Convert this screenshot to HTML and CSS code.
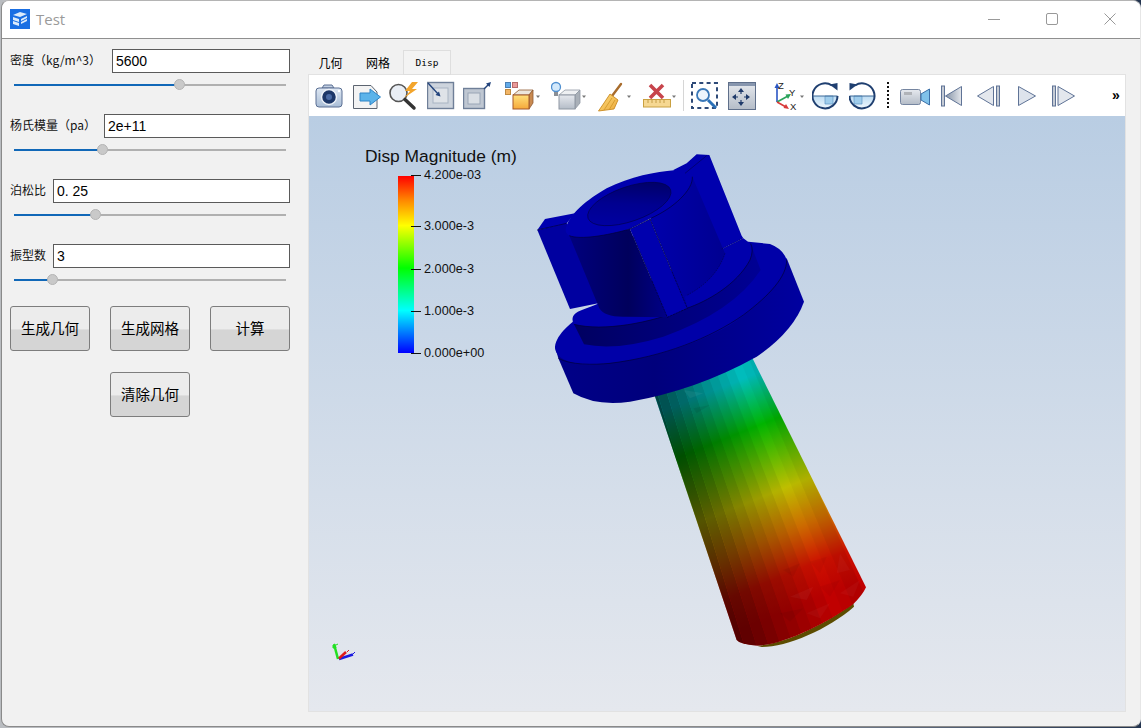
FILE: index.html
```
<!DOCTYPE html>
<html lang="zh">
<head>
<meta charset="utf-8">
<title>Test</title>
<link rel="stylesheet" href="styles.css">
</head>
<body>
<svg class="defs" width="0" height="0" aria-hidden="true">
  <defs>
    <linearGradient id="gBlue" x1="0" y1="0" x2="0" y2="1"><stop offset="0" stop-color="#dfe8f3"/><stop offset="1" stop-color="#a9bdd6"/></linearGradient>
    <linearGradient id="gGrey" x1="0" y1="0" x2="0" y2="1"><stop offset="0" stop-color="#e6e9ee"/><stop offset="1" stop-color="#b4bcc7"/></linearGradient>
    <linearGradient id="gYellow" x1="0" y1="0" x2="0" y2="1"><stop offset="0" stop-color="#ffe07a"/><stop offset="1" stop-color="#f6a83a"/></linearGradient>
    <linearGradient id="gTri" x1="0" y1="0" x2="1" y2="0"><stop offset="0" stop-color="#8593a6"/><stop offset="1" stop-color="#e4e7ec"/></linearGradient>
    <linearGradient id="gBroom" x1="0" y1="0" x2="1" y2="1"><stop offset="0" stop-color="#fbdc7e"/><stop offset="1" stop-color="#eea93a"/></linearGradient>
    <linearGradient id="gDial" x1="0" y1="0" x2="0" y2="1"><stop offset="0" stop-color="#bcdcf3"/><stop offset="1" stop-color="#eef6fc"/></linearGradient>
  </defs>
</svg>
<div class="window">
  <header class="titlebar">
    <svg class="app-icon" width="20" height="20" viewBox="0 0 20 20">
      <rect width="20" height="20" fill="#1a6fe3"/>
      <path d="M3 6 L10 3 L17 5 L10 8Z M3 8 L9 10 V13 L3 11Z M11 10 L17 7 V9 L11 12Z M3 12 L9 14 V17 L3 15Z M11 13 L17 10 V12 L11 15Z" fill="#dcebfb"/>
    </svg>
    <span class="app-name">Test</span>
    <div class="win-controls">
      <button class="win-btn"><svg width="12" height="12" viewBox="0 0 12 12"><path d="M0 6.500H12" stroke="#999" fill="none"/></svg></button>
      <button class="win-btn"><svg width="12" height="12" viewBox="0 0 12 12"><rect x=".5" y=".5" width="11" height="11" rx="1.5" stroke="#999" fill="none"/></svg></button>
      <button class="win-btn"><svg width="12" height="12" viewBox="0 0 12 12"><path d="M.5 .5L11.5 11.5M11.5 .5L.5 11.5" stroke="#999" fill="none"/></svg></button>
    </div>
  </header>
  <div class="main">
    <aside class="side">
      <div class="param">
        <div class="param-row"><label class="param-label label-density">密度（kg/m^3）</label><input class="param-input" value="5600"></div>
        <div class="slider"><div class="slider-fill" style="width:61%"><span class="slider-knob"></span></div></div>
      </div>
      <div class="param">
        <div class="param-row"><label class="param-label label-young">杨氏模量（pa）</label><input class="param-input" value="2e+11"></div>
        <div class="slider"><div class="slider-fill" style="width:32.7%"><span class="slider-knob"></span></div></div>
      </div>
      <div class="param">
        <div class="param-row"><label class="param-label label-short">泊松比</label><input class="param-input" value="0. 25"></div>
        <div class="slider"><div class="slider-fill" style="width:30%"><span class="slider-knob"></span></div></div>
      </div>
      <div class="param">
        <div class="param-row"><label class="param-label label-short">振型数</label><input class="param-input" value="3"></div>
        <div class="slider"><div class="slider-fill" style="width:14%"><span class="slider-knob"></span></div></div>
      </div>
      <div class="actions">
        <button class="action">生成几何</button>
        <button class="action">生成网格</button>
        <button class="action">计算</button>
        <button class="action action-center">清除几何</button>
      </div>
    </aside>
    <section class="work">
      <nav class="tabs">
        <span class="tab tab-geo">几何</span>
        <span class="tab tab-mesh">网格</span>
        <span class="tab tab-active">Disp</span>
      </nav>
      <div class="pane">
        <div class="toolbar">
          <svg width="38" height="40" viewBox="315 76 38 40">
            <path d="M322 88 l2-3 h8 l2 3Z" fill="#c3d0e2" stroke="#5a6f93"/>
            <rect x="316" y="88" width="26" height="19" rx="3" fill="url(#gBlue)" stroke="#5a6f93"/>
            <circle cx="329" cy="97" r="7.5" fill="#1d3768" stroke="#eef2f8" stroke-width="1.5"/>
            <circle cx="329" cy="97" r="3" fill="#4a6aa4"/>
            <circle cx="339" cy="91" r="1.2" fill="#fff"/>
          </svg>
          <svg width="36" height="40" viewBox="353 76 36 40">
            <path d="M353.5 85.5 H371 L377 92 V108.5 H353.5Z" fill="#f3f3f3" stroke="#5c6470"/>
            <path d="M360 93 H370 V89 L380.500 97 L370 105 V101 H360Z" fill="#5bb3ea" stroke="#2f84c6"/>
          </svg>
          <svg width="38" height="40" viewBox="389 76 38 40">
            <circle cx="398.500" cy="93" r="8.500" fill="#e9eef5" stroke="#555" stroke-width="1.6"/>
            <path d="M405 99.500 L414 108" stroke="#333" stroke-width="3.500" stroke-linecap="round"/>
            <path d="M412 82 L405 91 H410 L404 98 L417 89 H412 L418 82Z" fill="#f3a52c"/>
          </svg>
          <svg width="36" height="40" viewBox="427 76 36 40">
            <rect x="427.500" y="82.500" width="26" height="26" fill="#cdd4dd" stroke="#6f7f98" stroke-width="1.4"/>
            <rect x="433" y="88" width="15" height="15" fill="#dfe3e8" stroke="#a9b4c3"/>
            <path d="M428 83 L439 95" stroke="#23447d" stroke-width="1.400"/>
            <path d="M440.500 96.500 L435.500 95 L439 91.500Z" fill="#23447d"/>
          </svg>
          <svg width="42" height="40" viewBox="463 76 42 40">
            <rect x="463.500" y="88.500" width="21" height="20" fill="#bfc7d2" stroke="#6f7f98" stroke-width="1.400"/>
            <rect x="468" y="93" width="12" height="11" fill="#dadfe5" stroke="#9aa6b6"/>
            <path d="M484 89 L489 84" stroke="#23447d" stroke-width="1.400"/>
            <path d="M491 82 L489.500 87 L486 83.500Z" fill="#23447d"/>
          </svg>
          <svg width="46" height="40" viewBox="505 76 46 40">
            <rect x="505.500" y="82.500" width="5" height="5" fill="#62abe9" stroke="#4a7fb5"/>
            <rect x="512.500" y="82.500" width="5" height="5" fill="#e99a9a" stroke="#b56a6a"/>
            <rect x="505.500" y="89.500" width="5" height="5" fill="#f2b566" stroke="#c08a40"/>
            <path d="M513 95 L519 90 H533 L529 95Z" fill="#ece6dc" stroke="#8f5a34" stroke-width=".8"/>
            <path d="M529 95 L533 90 V103 L529 109Z" fill="#c98a50" stroke="#8f5a34" stroke-width=".8"/>
            <rect x="513" y="95" width="16" height="14" fill="url(#gYellow)" stroke="#a5592a"/>
            <path d="M536 95.500 H540 L538 98Z" fill="#777"/>
          </svg>
          <svg width="47" height="40" viewBox="551 76 47 40">
            <circle cx="556" cy="87" r="4.500" fill="#d3e9fb" stroke="#4f8fd0" stroke-width="1.300"/>
            <rect x="554" y="92" width="4" height="4" fill="#8a8f96"/>
            <path d="M559 95 L565 90 H580 L575 95Z" fill="#eef0f2" stroke="#8f98a3" stroke-width=".8"/>
            <path d="M575 95 L580 90 V103 L575 109Z" fill="#a9b0b8" stroke="#8f98a3" stroke-width=".8"/>
            <rect x="559" y="95" width="16" height="14" fill="url(#gGrey)" stroke="#8f98a3"/>
            <path d="M582 95.500 H586 L584 98Z" fill="#777"/>
          </svg>
          <svg width="45" height="40" viewBox="598 76 45 40">
            <path d="M621 84 L612 96" stroke="#a86c2c" stroke-width="2.400" stroke-linecap="round"/>
            <path d="M610 94 L618 100 L614 109 L598.500 111 L604 103Z" fill="url(#gBroom)" stroke="#c98a20" stroke-width=".9"/>
            <path d="M612 98 L604 110 M615 100 L609 110" stroke="#cf9526" stroke-width=".8"/>
            <path d="M627 95.500 H631 L629 98Z" fill="#777"/>
          </svg>
          <svg width="40" height="40" viewBox="643 76 40 40">
            <path d="M650 85 L663 98 M663 85 L650 98" stroke="#c7444b" stroke-width="3.600"/>
            <rect x="643.500" y="99.500" width="27" height="7.500" fill="#f6d892" stroke="#c9a040"/>
            <path d="M648 100 v3 M652 100 v3 M656 100 v3 M660 100 v3 M664 100 v3" stroke="#b98f35" stroke-width=".8"/>
            <path d="M672 95.500 H676 L674 98Z" fill="#777"/>
          </svg>
          <svg width="8" height="40" viewBox="683 76 8 40">
            <path d="M683.500 80 V111" stroke="#d6d6d6"/>
          </svg>
          <svg width="37" height="40" viewBox="691 76 37 40">
            <rect x="692" y="83" width="25" height="25" fill="none" stroke="#2e4a78" stroke-width="2" stroke-dasharray="4 3.300"/>
            <circle cx="703" cy="95" r="6" fill="#edf5fc" stroke="#3a78b8" stroke-width="1.800"/>
            <path d="M708 100 L716 108" stroke="#2a70b8" stroke-width="3"/>
          </svg>
          <svg width="46" height="40" viewBox="728 76 46 40">
            <rect x="728.500" y="82.500" width="27" height="27" fill="url(#gGrey)" stroke="#5f6f8a"/>
            <rect x="729" y="83" width="26" height="3" fill="#8796ae"/>
            <path d="M741 88 L738 92 H744Z M741 106 L738 102 H744Z M732 97 L736 94 V100Z M750 97 L746 94 V100Z" fill="#1f3a6a"/>
            <path d="M741 91 V94 M741 100 V103 M735 97 H738 M744 97 H747" stroke="#1f3a6a" stroke-width="1.200"/>
          </svg>
          <svg width="38" height="40" viewBox="774 76 38 40">
            <path d="M777 102 V87" stroke="#2a56c4" stroke-width="1.600"/>
            <path d="M777 83 L774.500 88 H779.500Z" fill="#2a56c4"/>
            <path d="M777 102 L788 96" stroke="#2aa35a" stroke-width="1.600"/>
            <path d="M791 94 L785.500 94.500 L788 99Z" fill="#2aa35a"/>
            <path d="M777 102 L786 107" stroke="#d83a3a" stroke-width="1.600"/>
            <path d="M789 109 L783.500 108 L786 104Z" fill="#d83a3a"/>
            <text x="778" y="89" class="axis-text">Z</text>
            <text x="789" y="96" class="axis-text">Y</text>
            <text x="790" y="110" class="axis-text">X</text>
            <path d="M800 95.500 H804 L802 98Z" fill="#777"/>
          </svg>
          <svg width="37" height="40" viewBox="812 76 37 40">
            <path d="M813 96 A12 12 0 0 0 837 96Z" fill="url(#gDial)"/>
            <path d="M825 96 H833 V104 H825Z" fill="#9fcdec" stroke="#5f97c4" stroke-width=".7"/>
            <path d="M812.500 96 H837.500" stroke="#3f6a98" stroke-width="1"/>
            <path d="M832 85.500 A12.500 12.500 0 1 0 837.500 96" fill="none" stroke="#1f3f70" stroke-width="2"/>
            <path d="M837.500 90.500 L837.500 83 L829.500 84.500Z" fill="#1f3f70"/>
          </svg>
          <svg width="36" height="40" viewBox="849 76 36 40">
            <g transform="translate(1687,0) scale(-1,1)">
              <path d="M813 96 A12 12 0 0 0 837 96Z" fill="url(#gDial)"/>
              <path d="M825 96 H833 V104 H825Z" fill="#9fcdec" stroke="#5f97c4" stroke-width=".7"/>
              <path d="M812.500 96 H837.500" stroke="#3f6a98" stroke-width="1"/>
              <path d="M832 85.500 A12.500 12.500 0 1 0 837.500 96" fill="none" stroke="#1f3f70" stroke-width="2"/>
              <path d="M837.500 90.500 L837.500 83 L829.500 84.500Z" fill="#1f3f70"/>
            </g>
          </svg>
          <svg width="15" height="40" viewBox="885 76 15 40">
            <path d="M888 82 V108" stroke="#111" stroke-width="2" stroke-dasharray="2 2"/>
          </svg>
          <svg width="41" height="40" viewBox="900 76 41 40">
            <rect x="900.500" y="89.500" width="20" height="15" rx="2" fill="url(#gGrey)" stroke="#7585a0"/>
            <rect x="904" y="92" width="8" height="3" fill="#b0b3b8"/>
            <path d="M921 94 L929.500 89 V105 L921 100Z" fill="#80c2ea" stroke="#3a6fa8"/>
          </svg>
          <svg width="36" height="40" viewBox="941 76 36 40">
            <rect x="941.500" y="86" width="3" height="20" fill="#c5cbd4" stroke="#5f7396"/>
            <path d="M945.500 96 L961.500 86.500 V105.500Z" fill="url(#gTri)" stroke="#5f7396"/>
          </svg>
          <svg width="41" height="40" viewBox="977 76 41 40">
            <path d="M977.500 96 L993.500 86.500 V105.500Z" fill="#e3e7ed" stroke="#5f7396"/>
            <rect x="996.500" y="86" width="3" height="20" fill="#c5cbd4" stroke="#5f7396"/>
          </svg>
          <svg width="34" height="40" viewBox="1018 76 34 40">
            <path d="M1018.500 86.500 L1035.500 96 L1018.500 105.500Z" fill="#dde3ec" stroke="#5f7396"/>
          </svg>
          <svg width="60" height="40" viewBox="1052 76 60 40">
            <rect x="1052.500" y="86" width="3" height="20" fill="#c5cbd4" stroke="#5f7396"/>
            <path d="M1058 86.500 L1074.500 96 L1058 105.500Z" fill="#e3e7ed" stroke="#5f7396"/>
          </svg>
          <span class="more">»</span>
        </div>
        <div class="viewport">
          <svg class="scene" width="816" height="594" viewBox="309 116 816 594">
            <defs>
              <linearGradient id="bar" x1="0" y1="0" x2="0" y2="1">
                <stop offset="0" stop-color="#ff0000"/><stop offset=".14" stop-color="#ff8a00"/><stop offset=".28" stop-color="#ffff00"/>
                <stop offset=".52" stop-color="#00ff00"/><stop offset=".76" stop-color="#00ffff"/><stop offset="1" stop-color="#0000ff"/>
              </linearGradient>
              <linearGradient id="shank" gradientUnits="userSpaceOnUse" x1="300" y1="0" x2="560" y2="650">
                <stop offset="0" stop-color="#00bcbc"/><stop offset=".21" stop-color="#00b400"/><stop offset=".5" stop-color="#bebe00"/>
                <stop offset=".68" stop-color="#cc6a00"/><stop offset=".85" stop-color="#cc1000"/><stop offset="1" stop-color="#c00000"/>
              </linearGradient>
              <clipPath id="shankClip"><path d="M20,-25 L290,780 Q300,793 350,797 C430,795 560,730 640,672 Q668,645 678,622 L325,-90Z"/></clipPath>
              <linearGradient id="cylL" x1="0" y1="0" x2="1" y2="0"><stop offset="0" stop-color="#00007e"/><stop offset=".6" stop-color="#00005c"/><stop offset="1" stop-color="#000088"/></linearGradient>
              <linearGradient id="cylR" x1="0" y1="0" x2="1" y2="0"><stop offset="0" stop-color="#0000ac"/><stop offset="1" stop-color="#000090"/></linearGradient>
              <linearGradient id="flangeSide" x1="0" y1="0" x2="1" y2="0"><stop offset="0" stop-color="#000088"/><stop offset=".4" stop-color="#00007c"/><stop offset="1" stop-color="#0000a0"/></linearGradient>
              <linearGradient id="collarSide" x1="0" y1="0" x2="1" y2="0"><stop offset="0" stop-color="#000060"/><stop offset="1" stop-color="#000094"/></linearGradient>
              <linearGradient id="holeFill" x1="0" y1="1" x2="1" y2="0"><stop offset="0" stop-color="#0000a8"/><stop offset=".5" stop-color="#000090"/><stop offset="1" stop-color="#000058"/></linearGradient>
            </defs>

            <text x="365" y="162" class="legend-title">Disp Magnitude (m)</text>
            <rect x="398" y="176" width="16" height="177" fill="url(#bar)"/>
            <path d="M411 175.500 H421 M411 226.500 H421 M411 269.500 H421 M411 311.500 H421 M411 353.500 H421" stroke="#111" stroke-width="1"/>
            <text x="424" y="179" class="legend-label">4.200e-03</text>
            <text x="424" y="230" class="legend-label">3.000e-3</text>
            <text x="424" y="273" class="legend-label">2.000e-3</text>
            <text x="424" y="315" class="legend-label">1.000e-3</text>
            <text x="424" y="357" class="legend-label">0.000e+00</text>

            <g transform="translate(640,380) scale(.33333)">
              <path d="M365,801 C440,801 565,748 642,680 L640,670 C560,730 430,795 350,797Z" fill="#5c4c00"/>
              <g clip-path="url(#shankClip)">
                <rect x="0" y="-160" width="720" height="1000" fill="url(#shank)"/>
                <polygon points="8,-109 34,-113 322,827 290,840" fill="#000" opacity=".56"/>
                <polygon points="34,-113 59,-115 355,813 322,827" fill="#000" opacity=".5"/>
                <polygon points="59,-115 86,-119 387,800 355,813" fill="#000" opacity=".44"/>
                <polygon points="86,-119 112,-121 419,787 387,800" fill="#000" opacity=".37"/>
                <polygon points="112,-121 137,-125 452,773 419,787" fill="#000" opacity=".3"/>
                <polygon points="137,-125 163,-129 484,760 452,773" fill="#000" opacity=".24"/>
                <polygon points="163,-129 189,-132 516,747 484,760" fill="#000" opacity=".18"/>
                <polygon points="189,-132 215,-135 548,733 516,747" fill="#000" opacity=".12"/>
                <polygon points="215,-135 241,-138 581,720 548,733" fill="#000" opacity=".06"/>
                <polygon points="267,-142 292,-145 645,693 613,707" fill="#000" opacity=".03"/>
                <polygon points="292,-145 316,-148 690,680 645,693" fill="#000" opacity=".08"/>
                <polygon points="-20,-105 8,-109 290,840 260,840" fill="#000" opacity=".64"/>
                <polygon points="430,570 480,550 460,590" fill="#000" opacity=".05"/>
                <polygon points="510,545 560,530 540,580" fill="#000" opacity=".04"/>
                <polygon points="600,520 630,570 590,580" fill="#fff" opacity=".03"/>
                <polygon points="450,650 520,620 500,660" fill="#fff" opacity=".04"/>
                <polygon points="540,620 600,600 570,650" fill="#000" opacity=".04"/>
                <polygon points="600,640 660,600 640,650" fill="#fff" opacity=".03"/>
                <polygon points="420,700 490,685 450,725" fill="#000" opacity=".05"/>
                <polygon points="500,700 570,670 540,715" fill="#fff" opacity=".03"/>
                <polygon points="160,85 210,75 170,100" fill="#000" opacity=".07"/>
                <polygon points="130,30 190,40 150,55" fill="#fff" opacity=".05"/>
              </g>
            </g>

            <g transform="translate(530,145) scale(.33333)">
              <path d="M75,605 L85,640 L130,745 Q200,785 300,770 Q500,735 680,635 Q790,560 822,470 L770,340 Z" fill="url(#flangeSide)"/>
              <path d="M75,605 C80,565 130,530 135,525 L655,290 L720,297 Q760,312 770,345 C770,400 690,480 600,540 C480,610 320,652 190,658 C120,660 75,640 75,605Z" fill="#0000a8"/>
              <path d="M85,640 C120,660 190,660 240,655 C400,635 540,580 640,510 C720,450 770,395 770,345" fill="none" stroke="#000038" stroke-width="2"/>
              <path d="M132,538 L162,598 Q260,618 400,575 Q610,500 692,375 L665,305 Z" fill="url(#collarSide)"/>
              <path d="M128,518 C135,495 180,490 205,475 L575,312 L640,280 L662,296 Q672,315 660,345 C620,420 530,470 470,490 C360,535 220,560 132,538 Q126,530 128,518Z" fill="#0000ac"/>
              <path d="M132,538 C220,560 360,535 470,490 C530,470 620,420 660,345 Q672,315 662,296" fill="none" stroke="#000038" stroke-width="2"/>
              <path d="M430,75 L470,55 L500,28 L538,30 L635,272 L640,280 L575,312 L470,130Z" fill="#0000ae"/>
              <path d="M465,85 L530,32" stroke="#000038" stroke-width="1.500" fill="none"/>
              <path d="M22,255 L110,235 L205,475 L120,492Z" fill="#0000a0"/>
              <path d="M22,255 L45,222 L135,205 L108,238Z" fill="#0000b0"/>
              <path d="M22,255 L110,235" stroke="#000038" stroke-width="2" fill="none"/>
              <path d="M118,272 L208,490 Q225,518 290,515 L412,517 L300,252Z" fill="url(#cylL)"/>
              <path d="M360,222 L487,95 L585,325 C565,390 510,430 465,455 L472,490Z" fill="url(#cylR)"/>
              <path d="M300,252 L360,222 L472,490 L412,517Z" fill="#0000ae"/>
              <path d="M108,248 C120,205 170,165 230,130 C300,95 380,80 432,76 L465,88 L487,95 C490,135 430,190 362,220 L300,252 C230,272 150,285 118,272 C108,265 105,258 108,248Z" fill="#0000ae"/>
              <path d="M118,272 C150,285 230,272 300,252 M362,220 C430,190 490,135 487,95" fill="none" stroke="#000038" stroke-width="2"/>
              <path d="M310,275 L412,517 M360,222 L472,490 M300,252 L360,222 M412,517 L472,490" fill="none" stroke="#000030" stroke-width="2" stroke-dasharray="7 2"/>
              <path d="M472,450 C520,425 565,385 585,325" fill="none" stroke="#000040" stroke-width="1.500" stroke-dasharray="5 3"/>
              <path d="M575,312 L640,280" stroke="#000040" stroke-width="1.500" stroke-dasharray="5 3" fill="none"/>
              <ellipse cx="298" cy="177" rx="131" ry="52" transform="rotate(-19 298 177)" fill="url(#holeFill)" stroke="#000050" stroke-width="2"/>
            </g>

            <g class="triad">
              <path d="M338 659 L334.500 646" stroke="#22e022" stroke-width="2.500"/>
              <path d="M333 645 l2-1 l1 4 l-3 0Z M336 645 l2 -1" fill="#22e022" stroke="#22e022"/>
              <path d="M339 659 L353 654.500" stroke="#1a1ae0" stroke-width="2.500"/>
              <path d="M339 658.500 L346 652" stroke="#e01a1a" stroke-width="2.500"/>
              <path d="M347 652 l2-2" stroke="#e01a1a"/>
              <path d="M353 654 l2 -2" stroke="#1a1ae0"/>
            </g>
          </svg>
        </div>
      </div>
    </section>
  </div>
</div>
</body>
</html>
```
FILE: styles.css
```
* { box-sizing: border-box; }

html, body { margin: 0; height: 100%; }

body {
  background: linear-gradient(to right, #b9bcc0 0, #b9bcc0 50%, #23344f 100%);
  font-family: "Noto Sans CJK SC", "Liberation Sans", sans-serif;
  overflow: hidden;
}

.defs { position: absolute; }

.window {
  margin-left: 1px;
  width: 1140px;
  height: 727px;
  display: flex;
  flex-direction: column;
  background: #f1f1f1;
  border: 1px solid #8a8a8a;
  border-top-color: #b4b4b4;
  border-right-color: #e6e6e6;
  border-radius: 8px;
  overflow: hidden;
}

.titlebar {
  flex: none;
  height: 38px;
  display: flex;
  align-items: center;
  padding: 0 1px 1px 8px;
  background: #fff;
  border-bottom: 1px solid #8f8f8f;
}

.app-icon { display: block; flex: none; }

.app-name {
  margin-left: 6px;
  font-family: "Open Sans", sans-serif;
  font-size: 15px;
  color: #9a9a9a;
}

.win-controls { margin-left: auto; display: flex; }

.win-btn {
  width: 58px;
  height: 36px;
  padding: 0 0 1px;
  border: 0;
  background: none;
  display: flex;
  align-items: center;
  justify-content: center;
}

.main { flex: 1; display: flex; min-height: 0; }

.side {
  flex: none;
  width: 306px;
  padding: 10px 18px 0 8px;
}

.param { margin-bottom: 28px; }

.param:nth-child(4) { margin-bottom: 25px; }

.param-row {
  display: flex;
  align-items: center;
  height: 24px;
}

.param-label {
  flex: none;
  padding-bottom: 3px;
  font-size: 12px;
  color: #111;
  white-space: nowrap;
}

.label-density { width: 102px; }
.label-young { width: 94px; }
.label-short { width: 43px; }

.param-input {
  flex: 1;
  min-width: 0;
  height: 24px;
  padding: 0 3px;
  border: 1px solid #5a5a5a;
  border-radius: 0;
  outline: 0;
  background: #fff;
  color: #000;
  font-family: "Liberation Sans", sans-serif;
  font-size: 14px;
}

.slider {
  position: relative;
  height: 2px;
  margin: 11px 4px 0;
  background: #b0b0b0;
}

.slider-fill {
  position: relative;
  height: 2px;
  background: #1168b8;
}

.slider-knob {
  position: absolute;
  right: -5.5px;
  top: -5px;
  width: 11px;
  height: 11px;
  border-radius: 50%;
  background: #c9c9c9;
  border: 1px solid #b4b4b4;
}

.actions {
  display: grid;
  grid-template-columns: repeat(3, 80px);
  grid-auto-rows: 45px;
  column-gap: 20px;
  row-gap: 21px;
}

.action {
  padding: 0 0 3px;
  border: 1px solid #7d7d7d;
  border-radius: 3px;
  background: linear-gradient(to bottom, #ececec 0, #ececec 50%, #d5d5d5 54%, #d5d5d5 100%);
  color: #000;
  font-family: "Noto Sans CJK SC", sans-serif;
  font-size: 14.5px;
}

.action-center { grid-column: 2; }

.work {
  flex: 1;
  min-width: 0;
  padding-top: 11px;
}

.tabs {
  position: relative;
  display: flex;
  height: 24px;
}

.tab {
  display: flex;
  align-items: center;
  justify-content: center;
  font-size: 12px;
  color: #000;
}

.tab-geo { width: 45px; }
.tab-mesh { width: 50px; }

.tab-active {
  position: relative;
  z-index: 1;
  width: 48px;
  height: 25px;
  border: 1px solid #dedede;
  background: #f3f3f3;
  font-family: "DejaVu Sans Mono", monospace;
  font-size: 9.5px;
}

.pane {
  width: 818px;
  height: 638px;
  border: 1px solid #e2e2e2;
  background: #fff;
}

.toolbar {
  height: 41px;
  display: flex;
  align-items: flex-end;
  padding-left: 6px;
}

.toolbar svg { display: block; flex: none; }

.axis-text {
  font-family: "Liberation Sans", sans-serif;
  font-size: 9.5px;
  fill: #222;
}

.more {
  width: 12px;
  height: 40px;
  font-family: "Liberation Sans", sans-serif;
  font-size: 14px;
  font-weight: 700;
  line-height: 38px;
  color: #000;
}

.viewport {
  height: 595px;
  background: linear-gradient(to bottom, #b9cde3 0, #e5e8ee 100%);
}

.scene { display: block; }

.legend-title {
  font-family: "Liberation Sans", sans-serif;
  font-size: 17.4px;
  fill: #111;
}

.legend-label {
  font-family: "Liberation Sans", sans-serif;
  font-size: 12.7px;
  fill: #111;
}
```
